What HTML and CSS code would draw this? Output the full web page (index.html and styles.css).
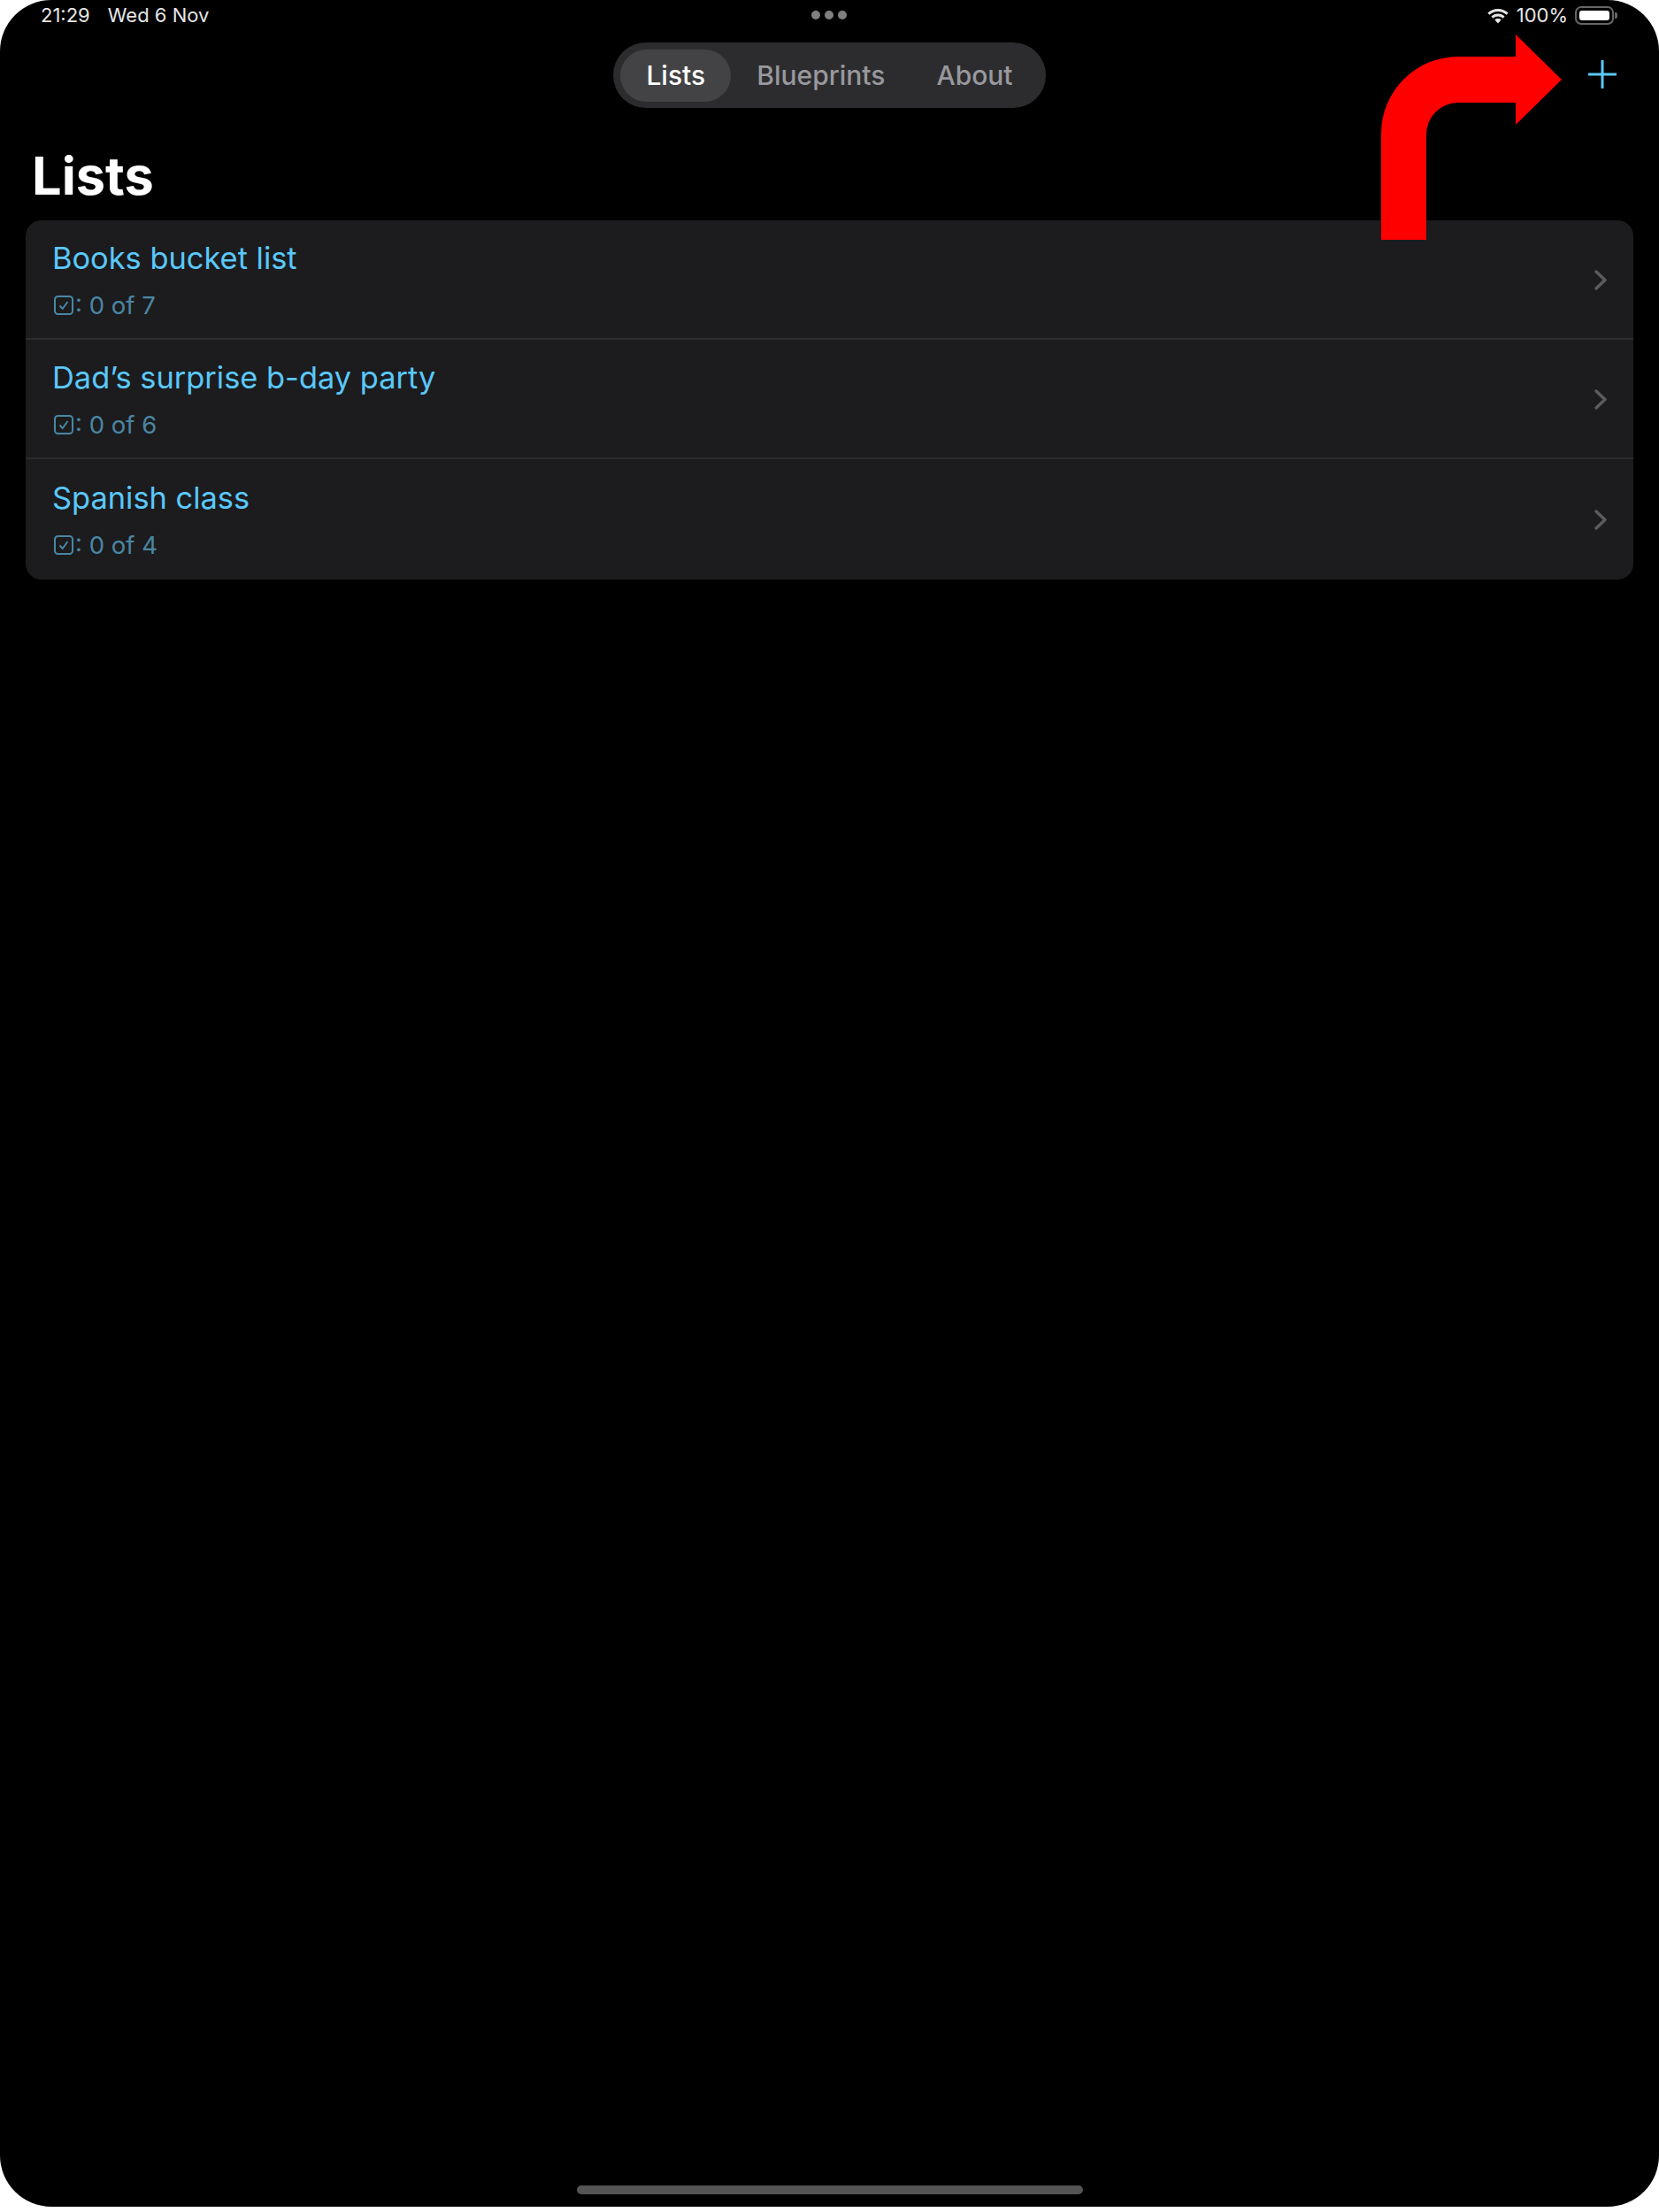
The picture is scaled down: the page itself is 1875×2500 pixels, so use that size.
FILE: index.html
```html
<!DOCTYPE html>
<html lang="en">

<head>
  <meta charset="UTF-8">
  <title>Lists</title>
  <link rel="stylesheet" href="styles.css">
</head>

<body>
  <div class="screen">
    <!-- status bar -->
    <div class="status-bar">
      <div class="status-left">
        <span>21:29</span>
        <span>Wed 6 Nov</span>
      </div>
      <div class="status-dots">
        <i></i><i></i><i></i>
      </div>
      <div class="status-right">
        <svg class="wifi" viewBox="0 0 26 19">
          <path d="M13 2C8.6 2 4.6 3.7 1.3 6.6L3.3 8.8C6 6.4 9.4 5 13 5s7 1.4 9.7 3.8l2-2.2C21.4 3.7 17.4 2 13 2z" />
          <path d="M13 7.6c-2.8 0-5.5 1-7.6 2.9l2 2.2c1.6-1.4 3.5-2.1 5.6-2.1s4 .7 5.6 2.1l2-2.2C18.5 8.6 15.8 7.6 13 7.6z" />
          <path d="M13 13c-1.4 0-2.6.5-3.6 1.4L13 18.4l3.6-4C15.6 13.5 14.4 13 13 13z" />
        </svg>
        <span>100%</span>
        <div class="battery">
          <div class="battery-fill"></div>
        </div>
        <div class="battery-cap"></div>
      </div>
    </div>

    <!-- tabs + add button -->
    <div class="top-bar">
      <div class="tabs">
        <div class="tab active">Lists</div>
        <div class="tab">Blueprints</div>
        <div class="tab">About</div>
      </div>
      <svg class="add-btn" viewBox="0 0 32 32">
        <path d="M16 0.5V31.5M0.5 16H31.5" />
      </svg>
    </div>

    <h1 class="page-title">Lists</h1>

    <div class="list-card">
      <div class="list-row">
        <div class="row-text">
          <div class="row-title">Books bucket list</div>
          <div class="row-sub">
            <svg class="check" viewBox="0 0 22 22">
              <rect x="1" y="1" width="20" height="20" rx="3.5" />
              <path d="M6.5 11.5l3.2 3.5 5.8-8" />
            </svg>
            <span>: 0 of 7</span>
          </div>
        </div>
        <svg class="chevron" viewBox="0 0 14 23">
          <path d="M2 2l10 9.5L2 21" />
        </svg>
      </div>
      <div class="list-row">
        <div class="row-text">
          <div class="row-title">Dad’s surprise b-day party</div>
          <div class="row-sub">
            <svg class="check" viewBox="0 0 22 22">
              <rect x="1" y="1" width="20" height="20" rx="3.5" />
              <path d="M6.5 11.5l3.2 3.5 5.8-8" />
            </svg>
            <span>: 0 of 6</span>
          </div>
        </div>
        <svg class="chevron" viewBox="0 0 14 23">
          <path d="M2 2l10 9.5L2 21" />
        </svg>
      </div>
      <div class="list-row">
        <div class="row-text">
          <div class="row-title">Spanish class</div>
          <div class="row-sub">
            <svg class="check" viewBox="0 0 22 22">
              <rect x="1" y="1" width="20" height="20" rx="3.5" />
              <path d="M6.5 11.5l3.2 3.5 5.8-8" />
            </svg>
            <span>: 0 of 4</span>
          </div>
        </div>
        <svg class="chevron" viewBox="0 0 14 23">
          <path d="M2 2l10 9.5L2 21" />
        </svg>
      </div>
    </div>

    <div class="home-bar"></div>

    <!-- red annotation arrow -->
    <svg class="callout-arrow" viewBox="0 0 204 232">
      <path d="M0 232V112A87 87 0 0 1 87 25H152V0L204 51L152 102V77H87A36 36 0 0 0 51 113V232Z" />
    </svg>
  </div>
</body>

</html>
```

FILE: styles.css
```css
body {
  margin: 0;
  padding: 0;
  background-color: #fff;
  font-family: Inter, Roboto, "Liberation Sans", sans-serif;
}

.screen {
  position: relative;
  display: flex;
  flex-direction: column;
  height: 2494px;
  overflow: hidden;
  background-color: #000;
  border-radius: 58px;
}

/* status bar */
.status-bar {
  display: grid;
  grid-template-columns: 1fr auto 1fr;
  align-items: center;
  height: 34px;
  padding: 0 47px 0 46px;
  color: #e6e6e6;
  font-size: 22px;
}

.status-left {
  display: flex;
  gap: 20px;
}

.status-dots {
  display: flex;
  gap: 5px;
}

.status-dots i {
  width: 10px;
  height: 10px;
  border-radius: 50%;
  background-color: #808080;
}

.status-right {
  display: flex;
  align-items: center;
  justify-content: flex-end;
  gap: 8px;
}

.wifi {
  width: 26px;
  height: 19px;
  fill: #e6e6e6;
}

.battery {
  box-sizing: border-box;
  width: 44px;
  height: 21px;
  padding: 3px;
  border: 2px solid #666;
  border-radius: 7px;
}

.battery-fill {
  height: 100%;
  background-color: #fff;
  border-radius: 3px;
}

.battery-cap {
  width: 3px;
  height: 7px;
  margin-left: -7px;
  background-color: #666;
  border-radius: 0 2px 2px 0;
}

/* tabs */
.top-bar {
  position: relative;
  display: flex;
  justify-content: center;
  margin-top: 14px;
}

.tabs {
  display: flex;
  align-items: center;
  height: 74px;
  padding: 0 8px;
  background-color: #2c2c2e;
  border-radius: 37px;
  font-size: 30px;
  font-weight: 500;
  color: #98989d;
}

.tab {
  padding: 0 29px;
  line-height: 59px;
  border-radius: 30px;
}

.tab.active {
  color: #fff;
  background-color: #434345;
}

.add-btn {
  position: absolute;
  top: 20px;
  right: 48px;
  width: 32px;
  height: 32px;
  fill: none;
  stroke: #5ac8fa;
  stroke-width: 3;
  stroke-linecap: round;
}

.page-title {
  margin: 41px 0 0 36px;
  color: #fff;
  font-size: 59.5px;
  line-height: 70px;
  font-weight: 700;
}

/* list */
.list-card {
  margin: 16px 29px 0;
  background-color: #1c1c1e;
  border-radius: 18px;
}

.list-row {
  display: flex;
  align-items: center;
  justify-content: space-between;
  box-sizing: border-box;
  height: 135px;
  padding: 2px 30px 0;
  border-bottom: 2px solid #2c2c2e;
}

.list-row:last-child {
  height: 136px;
  padding-top: 0;
  border-bottom: 0;
}

.row-text {
  display: flex;
  flex-direction: column;
  gap: 15px;
}

.row-title {
  color: #5ac8fa;
  font-size: 34.4px;
  line-height: 42px;
}

.row-sub {
  display: flex;
  align-items: center;
  color: #4a87a3;
  font-size: 27.5px;
  line-height: 34px;
}

.check {
  width: 22px;
  height: 22px;
  margin-left: 2px;
  margin-right: 2px;
  fill: none;
  stroke: #4a87a3;
  stroke-width: 2;
}

.chevron {
  width: 14px;
  height: 23px;
  fill: none;
  stroke: #5c5c5e;
  stroke-width: 3.4;
  stroke-linecap: round;
  stroke-linejoin: round;
}

.home-bar {
  width: 572px;
  height: 10px;
  margin: auto auto 14px;
  background-color: #545454;
  border-radius: 5px;
}

.callout-arrow {
  position: absolute;
  top: 39px;
  left: 1561px;
  width: 204px;
  height: 232px;
  fill: #f00;
}
```
